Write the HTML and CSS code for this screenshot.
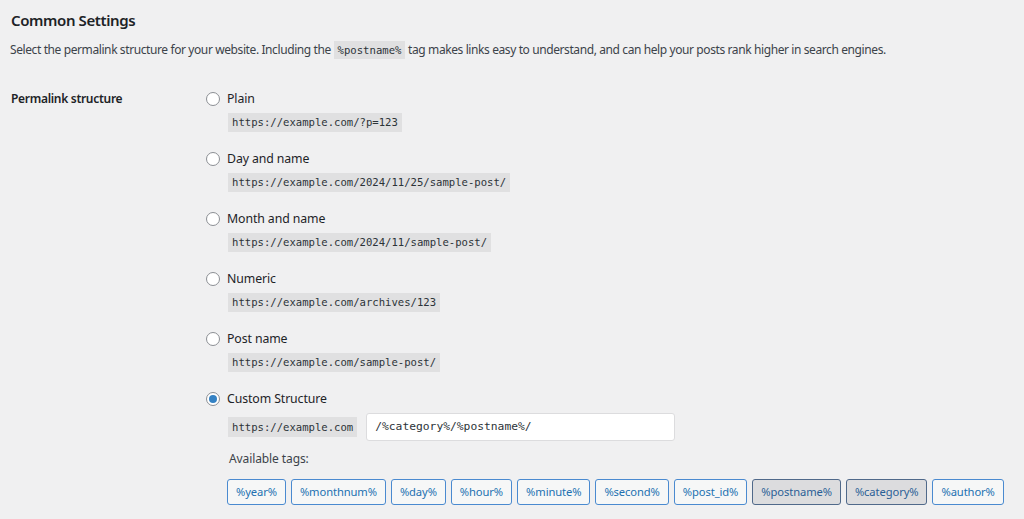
FILE: index.html
```html
<!DOCTYPE html>
<html lang="en">
<head>
<meta charset="utf-8">
<title>Permalink Settings</title>
<link rel="stylesheet" href="styles.css">
</head>
<body>
<div class="wrap">
  <h2 class="title">Common Settings</h2>
  <p class="desc">Select the permalink structure for your website. Including the <code>%postname%</code> tag makes links easy to understand, and can help your posts rank higher in search engines.</p>
  <div class="form-row">
    <div class="th">Permalink structure</div>
    <div class="td">
      <div class="option">
        <label class="radio-line"><span class="radio"></span>Plain</label>
        <code class="sample">https://example.com/?p=123</code>
      </div>
      <div class="option">
        <label class="radio-line"><span class="radio"></span>Day and name</label>
        <code class="sample">https://example.com/2024/11/25/sample-post/</code>
      </div>
      <div class="option">
        <label class="radio-line"><span class="radio"></span>Month and name</label>
        <code class="sample">https://example.com/2024/11/sample-post/</code>
      </div>
      <div class="option">
        <label class="radio-line"><span class="radio"></span>Numeric</label>
        <code class="sample">https://example.com/archives/123</code>
      </div>
      <div class="option">
        <label class="radio-line"><span class="radio"></span>Post name</label>
        <code class="sample">https://example.com/sample-post/</code>
      </div>
      <div class="option custom">
        <label class="radio-line"><span class="radio checked"></span>Custom Structure</label>
        <div class="custom-row">
          <code class="sample">https://example.com</code>
          <div class="input">/%category%/%postname%/</div>
        </div>
        <div class="avail">Available tags:</div>
        <div class="tags">
          <span class="tag">%year%</span>
          <span class="tag">%monthnum%</span>
          <span class="tag">%day%</span>
          <span class="tag">%hour%</span>
          <span class="tag">%minute%</span>
          <span class="tag">%second%</span>
          <span class="tag">%post_id%</span>
          <span class="tag active">%postname%</span>
          <span class="tag active">%category%</span>
          <span class="tag">%author%</span>
        </div>
      </div>
    </div>
  </div>
</div>
</body>
</html>
```
FILE: styles.css
```css
html, body {
  margin: 0;
  padding: 0;
  background: #f0f0f1;
}
body {
  font-family: "Noto Sans", "Open Sans", sans-serif;
  color: #3c434a;
  font-size: 12.5px;
}
.wrap {
  padding: 0 10px 0 11px;
}
.title {
  margin: 0;
  padding-top: 8px;
  font-size: 15px;
  letter-spacing: -0.4px;
  font-weight: 600;
  line-height: 24px;
  color: #1d2327;
}
.desc {
  margin: 6px 0 0 -1px;
  line-height: 24px;
  font-size: 12px;
  letter-spacing: -0.4px;
  color: #3c434a;
}
code {
  font-family: "DejaVu Sans Mono", "Liberation Mono", monospace;
  font-size: 10.6px;
  letter-spacing: 0;
  background: #e0e0e1;
  color: #2c3338;
  padding: 3px 4px;
}
.form-row {
  display: flex;
  margin-top: 26px;
}
.th {
  width: 195px;
  flex-shrink: 0;
  font-weight: 600;
  color: #1d2327;
  font-size: 12px;
  letter-spacing: -0.3px;
  line-height: 22px;
}
.td {
  display: flex;
  flex-direction: column;
}
.option {
  display: flex;
  flex-direction: column;
  align-items: flex-start;
  margin-bottom: 16px;
}
.radio-line {
  display: flex;
  align-items: center;
  gap: 7px;
  line-height: 22px;
  height: 22px;
  color: #1d2327;
  font-size: 12.3px;
  letter-spacing: -0.1px;
}
.radio {
  width: 14px;
  height: 14px;
  box-sizing: border-box;
  border: 1px solid #8c8f94;
  border-radius: 50%;
  background: #fff;
  display: flex;
  align-items: center;
  justify-content: center;
}
.radio.checked::after {
  content: "";
  width: 8px;
  height: 8px;
  border-radius: 50%;
  background: #3582c4;
}
.sample {
  display: block;
  margin: 3px 0 0 22px;
  height: 19px;
  line-height: 19px;
  padding: 0 4px;
  box-sizing: border-box;
}
.custom-row {
  display: flex;
  align-items: center;
  margin: 3px 0 0 0;
}
.custom-row .sample {
  margin: 0 0 0 22px;
  height: 20px;
  line-height: 20px;
}
.input {
  margin-left: 9px;
  width: 309px;
  height: 28px;
  box-sizing: border-box;
  background: #fff;
  border: 1px solid #dcdcde;
  border-radius: 3px;
  font-family: "DejaVu Sans Mono", "Liberation Mono", monospace;
  font-size: 11.3px;
  line-height: 26px;
  padding: 0 8px;
  color: #2c3338;
}
.avail {
  margin: 8px 0 0 23px;
  line-height: 20px;
  font-size: 12px;
  letter-spacing: -0.1px;
  color: #3c434a;
}
.tags {
  display: flex;
  gap: 5px;
  margin: 10px 0 0 21px;
}
.tag {
  display: block;
  height: 26px;
  box-sizing: border-box;
  line-height: 24px;
  padding: 0 8px;
  border: 1px solid #4a8ad0;
  border-radius: 3px;
  background: #f6f7f7;
  color: #2271b1;
  font-size: 11.2px;
  letter-spacing: -0.1px;
}
.tag.active {
  background: #dcdcde;
  border-color: #50698a;
  color: #2b5f96;
}
```
